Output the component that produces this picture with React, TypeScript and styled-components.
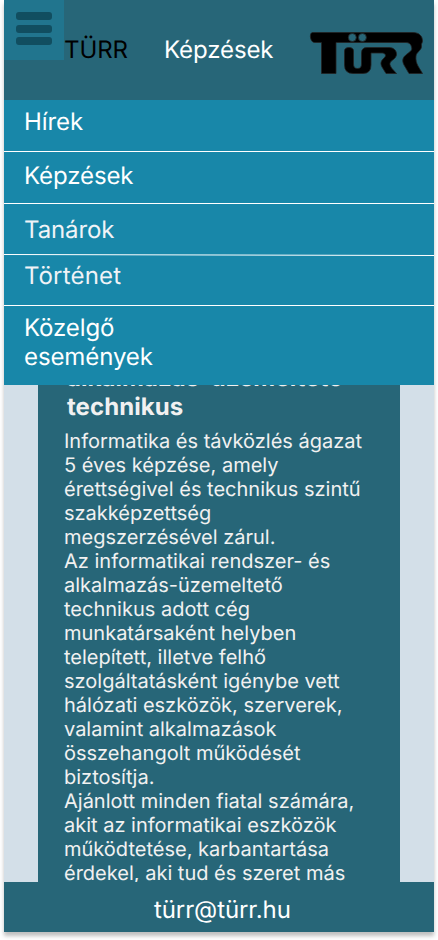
import React from "react";
import styled, { createGlobalStyle } from "styled-components";

const GlobalStyle = createGlobalStyle`
  * { box-sizing: border-box; }
  body {
    margin: 0;
    background: #fff;
    font-family: Inter, "Liberation Sans", sans-serif;
    font-weight: 400;
    text-rendering: geometricPrecision;
  }
  h1, h2, p { margin: 0; font-weight: inherit; }
`;

const Phone = styled.div`
  width: 430px;
  height: 932px;
  margin: 0 4px 8px;
  display: flex;
  flex-direction: column;
  background: #d3dfe8;
  box-shadow: 0 4px 4px rgba(0, 0, 0, 0.25);
`;

const Header = styled.header`
  flex: none;
  height: 100px;
  display: flex;
  align-items: flex-start;
  background: #276678;
`;

const MenuButton = styled.button`
  width: 60px;
  height: 60px;
  border: 0;
  padding: 12px 12px 0;
  display: flex;
  flex-direction: column;
  justify-content: flex-start;
  gap: 4.5px;
  background: #21758e;
`;

const Bar = styled.span`
  flex: none;
  width: 36px;
  height: 8px;
  border-radius: 3px;
  background: #114e60;
`;

const Brand = styled.span`
  width: 100px;
  padding-top: 35px;
  font-size: 24px;
  line-height: 29px;
  letter-spacing: -0.1px;
  color: #000;
`;

const PageTitle = styled.h1`
  width: 145px;
  padding-top: 35px;
  font-size: 24px;
  line-height: 29px;
  letter-spacing: -0.1px;
  color: #fff;
`;

const Logo = styled.svg`
  width: 116px;
  height: 46px;
  margin-top: 30px;
`;

const Menu = styled.nav`
  flex: none;
  height: 285px;
  display: flex;
  flex-direction: column;
  background: #1887a9;
`;

const MenuItem = styled.a<{ $height: number; $top: number; $dim?: boolean; $spacing?: number }>`
  flex: none;
  height: ${(p) => p.$height}px;
  padding: ${(p) => p.$top}px 200px 0 20px;
  font-size: 24px;
  line-height: 29px;
  letter-spacing: ${(p) => p.$spacing ?? -0.1}px;
  color: ${(p) => (p.$dim ? "#f0f3f7" : "#fff")};
`;

const Divider = styled.div`
  flex: none;
  height: 1px;
  background: #fff;
`;

const SlantedDivider = styled.svg`
  flex: none;
  display: block;
  width: 430px;
  height: 2px;
`;

const Content = styled.main`
  flex: 1;
  min-height: 0;
  overflow: hidden;
  padding: 0 34px;
`;

const Card = styled.article`
  height: 560px;
  margin-top: -22px;
  padding-left: 26px;
  background: #276678;
  color: #f1f1f1;
`;

const CardTitle = styled.h2`
  margin-left: 3px;
  font-size: 24px;
  line-height: 29px;
  font-weight: 700;
  letter-spacing: 0.06px;
  white-space: nowrap;
`;

const CardText = styled.p`
  padding-top: 8px;
  font-size: 20px;
  line-height: 24px;
  white-space: nowrap;
`;

const Footer = styled.footer`
  flex: none;
  height: 50px;
  padding: 13px 0 0 150px;
  font-size: 24px;
  line-height: 29px;
  letter-spacing: -0.1px;
  color: #fff;
  background: #276678;
`;

const description = [
  "Informatika és távközlés ágazat",
  "5 éves képzése, amely",
  "érettségivel és technikus szintű",
  "szakképzettség",
  "megszerzésével zárul.",
  "Az informatikai rendszer- és",
  "alkalmazás-üzemeltető",
  "technikus adott cég",
  "munkatársaként helyben",
  "telepített, illetve felhő",
  "szolgáltatásként igénybe vett",
  "hálózati eszközök, szerverek,",
  "valamint alkalmazások",
  "összehangolt működését",
  "biztosítja.",
  "Ajánlott minden fiatal számára,",
  "akit az informatikai eszközök",
  "működtetése, karbantartása",
  "érdekel, aki tud és szeret más",
];

export default function App() {
  return (
    <>
      <GlobalStyle />
      <Phone>
        <Header>
          <MenuButton aria-label="Menü">
            <Bar />
            <Bar />
            <Bar />
          </MenuButton>
          <Brand>TÜRR</Brand>
          <PageTitle>Képzések</PageTitle>
          <Logo viewBox="309 30 116 46" fill="#000" stroke="#222" strokeWidth="0.8">
            <path d="M312.500 32.500H413C419 32.500 422.500 36 422.500 41C422.500 43 421 43.500 421.500 46C422 50 416.500 52 416 56C415.500 60 416.500 63 418 66L422.500 73.500H409L404 65C401.500 60 403 57 407 54C411 51 412.500 50 411.500 47C411 44 409 42.500 406 42.500H336V73.500H321.500V42.500H314.500C310 42.500 309 32.500 312.500 32.500Z" />
            <path d="M344.500 51Q344.500 47.500 349 47.500T353.500 51V64Q353.500 68.500 357.500 68.500T361.500 64V53Q361.500 47.500 367 47.500H389C394 47.500 397 51 396.500 55C396 59 391 60 390 63C389.500 65 391 67 392 68.500L396.500 73.500H386L382 67C380 63 381 61 384 58C387 55.500 385 53 382 53H371V65Q371 73.500 363 73.500H353Q344.500 73.500 344.500 65Z" />
            <circle cx="352.300" cy="37.500" r="4" fill="#276678" />
            <circle cx="362.400" cy="37.500" r="4" fill="#276678" />
          </Logo>
        </Header>
        <Menu>
          <MenuItem $height={51} $top={7}>Hírek</MenuItem>
          <Divider />
          <MenuItem $height={51} $top={9}>Képzések</MenuItem>
          <Divider />
          <MenuItem $height={50} $top={11} $dim>Tanárok</MenuItem>
          <SlantedDivider viewBox="0 0 430 2">
            <path d="M0 .5L430 1.500" stroke="#fff" strokeWidth="1" />
          </SlantedDivider>
          <MenuItem $height={49} $top={5} $dim $spacing={0.2}>Történet</MenuItem>
          <Divider />
          <MenuItem $height={79} $top={7}>Közelgő<br />események</MenuItem>
        </Menu>
        <Content>
          <Card>
            <CardTitle>alkalmazás-üzemeltető<br />technikus</CardTitle>
            <CardText>
              {description.map((line) => (
                <React.Fragment key={line}>{line}<br /></React.Fragment>
              ))}
            </CardText>
          </Card>
        </Content>
        <Footer>türr@türr.hu</Footer>
      </Phone>
    </>
  );
}
